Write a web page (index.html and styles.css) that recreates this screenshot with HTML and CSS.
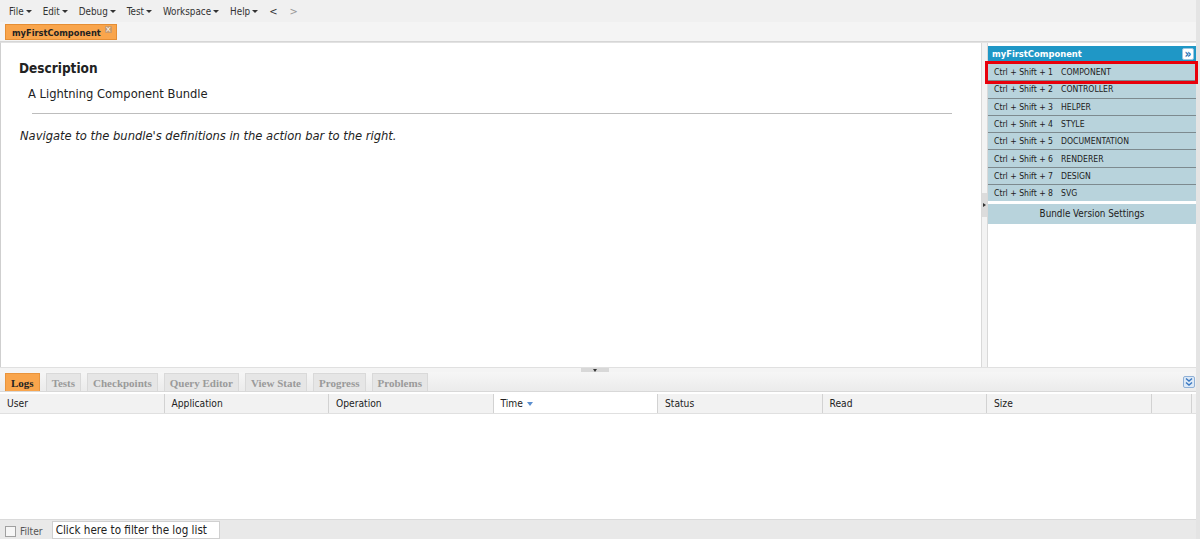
FILE: index.html
```html
<!DOCTYPE html>
<html>
<head>
<meta charset="utf-8">
<link rel="stylesheet" href="styles.css">
</head>
<body>
<div class="app">
  <div class="menubar">
    <span class="menu">File <i class="caret"></i></span>
    <span class="menu">Edit <i class="caret"></i></span>
    <span class="menu">Debug <i class="caret"></i></span>
    <span class="menu">Test <i class="caret"></i></span>
    <span class="menu">Workspace <i class="caret"></i></span>
    <span class="menu">Help <i class="caret"></i></span>
    <span class="menu nav">&lt;</span>
    <span class="menu nav dim">&gt;</span>
  </div>
  <div class="tabbar">
    <div class="filetab">myFirstComponent<span class="close">×</span></div>
  </div>
  <div class="main">
    <div class="editor">
      <h2 class="desc-title">Description</h2>
      <div class="desc-text">A Lightning Component Bundle</div>
      <hr class="divider">
      <p class="hint">Navigate to the bundle's definitions in the action bar to the right.</p>
    </div>
    <div class="vsplit"><div class="vhandle"><i class="tri-right"></i></div></div>
    <div class="sidebar">
      <div class="side-head">
        <span>myFirstComponent</span>
        <span class="side-btn">»</span>
      </div>
      <div class="side-rows">
        <div class="row"><span class="key">Ctrl + Shift + 1</span><span>COMPONENT</span></div>
        <div class="row"><span class="key">Ctrl + Shift + 2</span><span>CONTROLLER</span></div>
        <div class="row"><span class="key">Ctrl + Shift + 3</span><span>HELPER</span></div>
        <div class="row"><span class="key">Ctrl + Shift + 4</span><span>STYLE</span></div>
        <div class="row"><span class="key">Ctrl + Shift + 5</span><span>DOCUMENTATION</span></div>
        <div class="row"><span class="key">Ctrl + Shift + 6</span><span>RENDERER</span></div>
        <div class="row"><span class="key">Ctrl + Shift + 7</span><span>DESIGN</span></div>
        <div class="row"><span class="key">Ctrl + Shift + 8</span><span>SVG</span></div>
      </div>
      <div class="bundle-btn">Bundle Version Settings</div>
      <div class="highlight"></div>
    </div>
  </div>
  <div class="hsplit"><div class="hhandle"><i class="tri-down"></i></div></div>
  <div class="bottomtabs">
    <span class="btab active">Logs</span>
    <span class="btab">Tests</span>
    <span class="btab">Checkpoints</span>
    <span class="btab">Query Editor</span>
    <span class="btab">View State</span>
    <span class="btab">Progress</span>
    <span class="btab">Problems</span>
    <span class="collapse-btn">
      <svg width="10" height="10" viewBox="0 0 10 10"><path d="M2 1.5 L5 4 L8 1.5 M2 5.5 L5 8 L8 5.5" fill="none" stroke="#3a78c0" stroke-width="1.4"/></svg>
    </span>
  </div>
  <div class="colheader">
    <div class="col">User</div>
    <div class="col">Application</div>
    <div class="col">Operation</div>
    <div class="col sorted">Time <i class="sort"></i></div>
    <div class="col">Status</div>
    <div class="col">Read</div>
    <div class="col">Size</div>
    <div class="col last"></div>
  </div>
  <div class="logbody"></div>
  <div class="footer">
    <span class="chk"></span>
    <span class="filter-label">Filter</span>
    <span class="filter-input">Click here to filter the log list</span>
  </div>
</div>
</body>
</html>
```
FILE: styles.css
```css
* { box-sizing: border-box; }
html, body { margin: 0; padding: 0; }
body {
  width: 1200px;
  height: 539px;
  overflow: hidden;
  background: #fff;
  font-family: "DejaVu Sans Condensed", "DejaVu Sans", sans-serif;
  font-stretch: condensed;
  color: #222;
}
.app {
  display: flex;
  flex-direction: column;
  height: 539px;
  border-right: 4px solid #e4e4e4;
}
.menubar {
  height: 22px;
  flex: none;
  display: flex;
  align-items: center;
  padding-left: 9px;
  background: #f0f0f0;
  font-size: 9.8px;
  color: #333;
}
.menu { margin-right: 11px; display: inline-flex; align-items: center; }
.menu.nav { margin-right: 12px; font-size: 11px; }
.menu.dim { color: #999; }
.caret {
  display: inline-block;
  width: 0; height: 0;
  margin-left: 2px;
  border-left: 3px solid transparent;
  border-right: 3px solid transparent;
  border-top: 3px solid #333;
}
.tabbar {
  height: 20px;
  flex: none;
  background: #f4f4f4;
  border-bottom: 1px solid #d6d6d6;
  padding: 2px 0 0 5px;
  display: flex;
  align-items: flex-start;
}
.filetab {
  display: flex;
  align-items: center;
  height: 16px;
  padding: 0 4px 0 6px;
  background: #f9a54c;
  border: 1px solid #e58e34;
  font-weight: bold;
  font-size: 9.2px;
  color: #222;
}
.close {
  font-size: 8px;
  color: #fff;
  background: #c99a6a;
  width: 7px; height: 7px;
  line-height: 7px;
  text-align: center;
  margin-left: 4px;
  margin-top: -6px;
  border-radius: 1px;
  font-weight: normal;
}
.main {
  height: 325px;
  flex: none;
  display: flex;
  border-top: 1px solid #e2e2e2;
  border-left: 1px solid #cfcfcf;
}
.editor {
  width: 981px;
  flex: none;
  padding: 16px 0 0 18px;
  border-right: 1px solid #d9d9d9;
}
.desc-title {
  margin: 0;
  font-size: 13.5px;
  font-weight: bold;
  line-height: 18px;
}
.desc-text {
  margin: 8px 0 0 9px;
  font-size: 12.8px;
  line-height: 17px;
}
.divider {
  margin: 11px 0 0 13px;
  width: 920px;
  border: none;
  border-top: 1px solid #bdbdbd;
  height: 0;
}
.hint {
  margin: 13px 0 0 1px;
  font-size: 12.8px;
  font-style: italic;
  line-height: 17px;
}
.vsplit {
  width: 5px;
  flex: none;
  background: #f3f3f3;
}
.vhandle {
  margin-top: 150px;
  width: 5px;
  height: 24px;
  background: #dcdcdc;
  display: flex;
  align-items: center;
  justify-content: center;
}
.tri-right {
  width: 0; height: 0;
  border-top: 2px solid transparent;
  border-bottom: 2px solid transparent;
  border-left: 3px solid #333;
}
.sidebar {
  flex: 1;
  position: relative;
  border-left: 1px solid #d9d9d9;
  padding-top: 3px;
}
.side-head {
  height: 15px;
  background: #1f97c6;
  color: #fff;
  font-weight: bold;
  font-size: 9.3px;
  display: flex;
  align-items: center;
  justify-content: space-between;
  padding: 0 2px 0 4px;
}
.side-btn {
  width: 12px;
  height: 12px;
  background: #fff;
  color: #1f6fb5;
  font-size: 12px;
  line-height: 10px;
  text-align: center;
  border-radius: 2px;
  font-weight: bold;
  border: 1px solid #9cc6e0;
}
.side-rows { margin-top: 2px; }
.row {
  height: 17.3px;
  background: #b8d3dc;
  border-top: 1px solid #7d8a8f;
  display: flex;
  align-items: center;
  padding-left: 6px;
  font-size: 8.6px;
  color: #222;
}
.key { width: 67px; }
.bundle-btn {
  margin-top: 3px;
  height: 20px;
  background: #b8d3dc;
  text-align: center;
  font-size: 9.8px;
  line-height: 20px;
  color: #222;
}
.highlight {
  position: absolute;
  left: -3px;
  top: 18px;
  width: 213px;
  height: 23px;
  border: 3px solid #e8000b;
}
.hsplit {
  height: 5px;
  flex: none;
  background: #f4f4f4;
  border-top: 1px solid #e0e0e0;
  display: flex;
  justify-content: center;
}
.hhandle {
  width: 28px;
  height: 4px;
  background: #d8d8d8;
  display: flex;
  justify-content: center;
  align-items: center;
  margin-left: -6px;
}
.tri-down {
  width: 0; height: 0;
  border-left: 2px solid transparent;
  border-right: 2px solid transparent;
  border-top: 3px solid #333;
}
.bottomtabs {
  height: 20px;
  flex: none;
  display: flex;
  align-items: flex-end;
  padding-left: 5px;
  gap: 6px;
  background: linear-gradient(#f6f6f6, #ebebeb);
  border-bottom: 1px solid #d8d8d8;
}
.btab {
  height: 18px;
  padding: 0 5px;
  display: flex;
  align-items: center;
  font-family: "Liberation Serif", serif;
  font-weight: bold;
  font-size: 11px;
  color: #9a9a9a;
  background: #e6e6e6;
  border: 1px solid #d9d9d9;
  border-bottom: none;
}
.btab.active {
  background: #f9a54c;
  color: #222;
  border-color: #e9943c;
}
.collapse-btn {
  margin-left: auto;
  align-self: center;
  width: 12px;
  height: 12px;
  border: 1px solid #8fb0d6;
  background: #dde9f6;
  border-radius: 2px;
  display: flex;
  align-items: center;
  justify-content: center;
  margin-right: 1px;
}
.colheader {
  height: 20px;
  flex: none;
  display: flex;
  background: #f2f2f2;
  border-bottom: 1px solid #e0e0e0;
  margin-top: 2px;
}
.col {
  width: 164.5px;
  flex: none;
  border-right: 1px solid #d2d2d2;
  font-size: 10.2px;
  padding-left: 7px;
  display: flex;
  align-items: center;
  color: #222;
}
.col.sorted { background: #fff; }
.col.last { width: 40px; }
.sort {
  display: inline-block;
  width: 0; height: 0;
  margin-left: 4px;
  border-left: 3px solid transparent;
  border-right: 3px solid transparent;
  border-top: 4px solid #5b8fd0;
}
.logbody { flex: 1; background: #fff; }
.footer {
  height: 20px;
  flex: none;
  background: #e9e9e9;
  border-top: 1px solid #dadada;
  display: flex;
  align-items: center;
  padding-left: 5px;
}
.chk {
  width: 11px;
  height: 11px;
  border: 1px solid #a0a0a0;
  background: #f6f6f6;
  margin-top: 3px;
}
.filter-label {
  font-size: 10.2px;
  color: #555;
  margin-left: 4px;
  margin-top: 4px;
}
.filter-input {
  margin-left: 9px;
  width: 168px;
  height: 18px;
  background: #fff;
  border: 1px solid #d0d0d0;
  font-size: 11.6px;
  line-height: 16px;
  padding-left: 3px;
  color: #222;
  align-self: flex-end;
}
```
